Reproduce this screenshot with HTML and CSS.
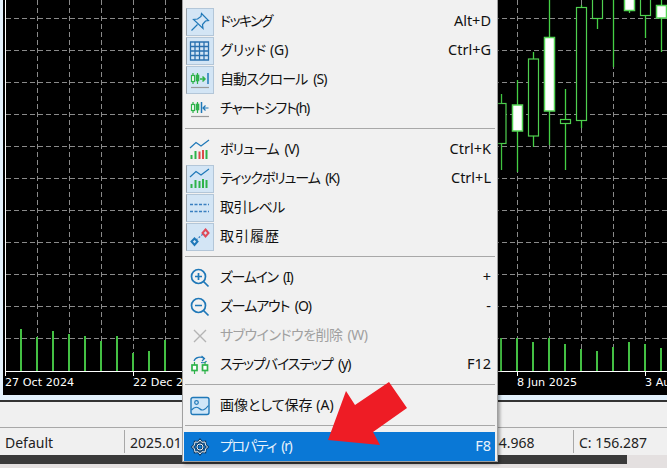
FILE: index.html
```html
<!DOCTYPE html>
<html lang="ja">
<head>
<meta charset="utf-8">
<title>Chart menu</title>
<link rel="stylesheet" href="styles.css">
</head>
<body>
<div class="page">
  <div class="chart-frame">
    <svg class="chart" width="664" height="395" viewBox="3 0 664 395">
      <path class="grid" d="M6 18.5H667M6 50.5H667M6 82.5H667M6 114.5H667M6 146.5H667M6 178.5H667M6 210.5H667M6 242.5H667M6 274.5H667M6 306.5H667M6 338.5H667"/>
      <path class="grid" d="M37.5 0V371M69.5 0V371M101.5 0V371M133.5 0V371M165.5 0V371M517.5 0V371M549.5 0V371M581.5 0V371M613.5 0V371M645.5 0V371"/>
      <path class="axis" d="M5.5 0V371.5H667M5.5 371V376M133.5 371V376M517.5 371V376M645.5 371V376"/>
      <path class="vol" d="M21 371V329M37 371V337M53 371V331M69 371V334M85 371V336M101 371V341M117 371V336M133 371V353M149 371V351M165 371V340M501 371V338M517 371V338M533 371V342M549 371V338M565 371V344M581 371V349M597 371V351M613 371V347M629 371V342M645 371V344M661 371V348"/>
      <path class="wick" d="M501.5 94V170M517.5 80V172M533.5 52V147M549.5 0V145M565.5 89V170M581.5 5V128M597.5 0V29M613.5 0V67M629.5 0V13M645.5 0V38M661.5 0V52"/>
      <rect class="hollow" x="495" y="103.5" width="11" height="40"/>
      <rect class="solid" x="512.5" y="105" width="10" height="26"/>
      <rect class="hollow" x="528.5" y="59" width="10" height="77"/>
      <rect class="solid" x="544.5" y="37.5" width="10" height="73.500"/>
      <rect class="hollow" x="560.5" y="119.500" width="10" height="4"/>
      <rect class="hollow" x="576.5" y="7.500" width="10" height="113"/>
      <rect class="hollow" x="592.500" y="-2" width="10" height="20.500"/>
      <rect class="solid" x="624.500" y="-2" width="10" height="12.500"/>
      <rect class="hollow" x="640.500" y="-2" width="10" height="17.500"/>
      <rect class="solid" x="656.500" y="5.500" width="10" height="12.500"/>
      <text class="date" x="5" y="386">27 Oct 2024</text>
      <text class="date" x="133" y="386">22 Dec 2024</text>
      <text class="date" x="517" y="386">8 Jun 2025</text>
      <text class="date" x="645" y="386">3 Aug</text>
    </svg>
  </div>
  <div class="toolbar"></div>
  <div class="status">
    <div class="cell cell-name">Default</div>
    <div class="cell cell-date">2025.01.05 00:00</div>
    <div class="cell cell-low">L: 154.968</div>
    <div class="cell cell-close">C: 156.287</div>
  </div>
  <div class="bottom">
    <div class="taskbar"></div>
  </div>

  <div class="menu">
    <div class="row"><span class="ic on"><svg viewBox="0 0 20 20"><path class="b" d="M11.500 1.500 18.500 8.500 15.500 9 12.500 12.500 13 16.500 3.500 7.500 7.500 7 11 4.500ZM7.500 12.500 1.500 18.500"/></svg></span><span class="lb t16">ドッキング</span><span class="sc">Alt+D</span></div>
    <div class="row"><span class="ic on"><svg viewBox="0 0 20 20"><path class="bg" d="M0 1H19M0 5.500H19M0 10H19M0 14.500H19M0 19H19M.5 .5V19.500M5 .5V19.500M9.500 .5V19.500M14 .5V19.500M18.500 .5V19.500"/></svg></span><span class="lb">グリッド (G)</span><span class="sc">Ctrl+G</span></div>
    <div class="row"><span class="ic on"><svg viewBox="0 0 20 20"><path class="g" d="M3 3V14M7.500 3V14"/><rect class="gh" x="1.500" y="5.500" width="3" height="6"/><rect class="gf" x="6" y="5" width="3" height="6"/><path class="gb" d="M10 9H14.500M12.500 6.500 15 9 12.500 11.500"/><path class="bb" d="M18 3V14"/><path class="u" d="M1 17.500H19"/></svg></span><span class="lb t07">自動スクロール (S)</span></div>
    <div class="row"><span class="ic"><svg viewBox="0 0 20 20"><path class="g" d="M3 3V14M7.500 3V14"/><rect class="gh" x="1.500" y="5.500" width="3" height="6"/><rect class="gf" x="6" y="5" width="3" height="6"/><path class="bb" d="M11.500 3V14"/><path class="b" d="M13 9H18.500M15.500 6.500 13 9 15.500 11.500"/><path class="u" d="M1 17.500H19"/></svg></span><span class="lb t12">チャートシフト(h)</span></div>
    <div class="sep"></div>
    <div class="row"><span class="ic"><svg viewBox="0 0 20 20"><path class="b" d="M0 8 6 2.500 11 6 19 0"/><path class="g2" d="M1.500 19V15M5.500 19V11M16.500 19V10"/><path class="r" d="M9.500 19V11.500M13 19V10"/></svg></span><span class="lb t07">ボリューム (V)</span><span class="sc">Ctrl+K</span></div>
    <div class="row"><span class="ic on"><svg viewBox="0 0 20 20"><path class="b" d="M0 8 6 2.500 11 6 19 0"/><path class="g2" d="M1.500 19V15M5.500 19V11M9.500 19V12M13 19V10M16.500 19V11"/></svg></span><span class="lb t09">ティックボリューム (K)</span><span class="sc">Ctrl+L</span></div>
    <div class="row"><span class="ic on"><svg viewBox="0 0 20 20"><path class="d" d="M0 6.500H19M0 13.500H19"/></svg></span><span class="lb t06">取引レベル</span></div>
    <div class="row"><span class="ic on"><svg viewBox="0 0 20 20"><path class="dt" d="M6 13 13 7"/><path class="b2f" d="M4.500 11.500 7.500 14.500 4.500 18 1.500 14.500Z"/><path class="rr" d="M15.500 2.500 18.500 6 15.500 9.500 12.500 6Z"/></svg></span><span class="lb p1">取引履歴</span></div>
    <div class="sep"></div>
    <div class="row"><span class="ic"><svg viewBox="0 0 20 20"><circle class="b2" cx="8.500" cy="8.500" r="7"/><path class="b2" d="M13.500 13.500 18.500 18.500M5 8.500H12M8.500 5V12"/></svg></span><span class="lb t10">ズームイン (I)</span><span class="sc">+</span></div>
    <div class="row"><span class="ic"><svg viewBox="0 0 20 20"><circle class="b2" cx="8.500" cy="8.500" r="7"/><path class="b2" d="M13.500 13.500 18.500 18.500M5 8.500H12"/></svg></span><span class="lb t09">ズームアウト (O)</span><span class="sc">-</span></div>
    <div class="row off"><span class="ic"><svg viewBox="0 0 20 20"><path class="x" d="M4 4 16 16M16 4 4 16"/></svg></span><span class="lb t05">サブウインドウを削除 (W)</span></div>
    <div class="row"><span class="ic"><svg viewBox="0 0 20 20"><path class="b" d="M4 6C5 2 11 1 14 3.500M16.500 6C15.500 8 13.500 8 11 7.500"/><path class="b" d="M11.500 1 14.500 3.500 12 6"/><path class="g" d="M4.500 7V19M15 7V19"/><rect class="gh2" x="2" y="10" width="5" height="5.500"/><rect class="gh2" x="12.500" y="10" width="5" height="5.500"/></svg></span><span class="lb t09">ステップバイステップ (y)</span><span class="sc">F12</span></div>
    <div class="sep"></div>
    <div class="row"><span class="ic"><svg viewBox="0 0 20 20"><rect class="pic" x="1" y="1.500" width="18" height="17" rx="2"/><circle class="b" cx="6.500" cy="6.500" r="1.800"/><path class="b" d="M1.500 14C5 10 8 11 10 13S15 14 18.500 9.500"/></svg></span><span class="lb">画像として保存 (A)</span></div>
    <div class="sep"></div>
    <div class="row active"><span class="ic"><svg viewBox="0 0 20 20"><path class="gear-o" d="M10 3 11.800 5.300 15 5 15.500 8 17.500 10 15.500 12 15 15 11.800 14.700 10 17 8.200 14.700 5 15 4.500 12 2.500 10 4.500 8 5 5 8.200 5.300Z"/><circle class="gear-o" cx="10" cy="10" r="3"/><path class="w" d="M10 3 11.800 5.300 15 5 15.500 8 17.500 10 15.500 12 15 15 11.800 14.700 10 17 8.200 14.700 5 15 4.500 12 2.500 10 4.500 8 5 5 8.200 5.300Z"/><circle class="w" cx="10" cy="10" r="3"/></svg></span><span class="lb t10">プロパティ (r)</span><span class="sc">F8</span></div>
  </div>

  <svg class="arrow" width="90" height="70" viewBox="325 380 90 70"><polygon points="328,440 346,391 355,405 389,382 407,408 373,432 380,445"/></svg>
</div>
</body>
</html>
```
FILE: styles.css
```css
* { box-sizing: border-box; }
html, body { margin: 0; padding: 0; }
body { font-family: "Noto Sans", "Noto Sans CJK JP", sans-serif; overflow: hidden; }
.page { position: relative; width: 667px; height: 468px; overflow: hidden; background: #f3ebeb; }

.chart-frame { height: 400px; padding-left: 3px; background: #e2f0fb; }
.chart { display: block; background: #000; }
.grid { fill: none; stroke: #8a8a8a; stroke-width: 1; stroke-dasharray: 5 3; }
.axis { fill: none; stroke: #fff; stroke-width: 1; }
.vol { fill: none; stroke: #43c043; stroke-width: 2; }
.wick { fill: none; stroke: #45d045; stroke-width: 1.300; }
.hollow { fill: #000; stroke: #4fd04f; stroke-width: 1.200; }
.solid { fill: #fff; stroke: #55d555; stroke-width: 1.500; }
.date { fill: #fff; font: 11.200px "DejaVu Sans", sans-serif; }

.toolbar { height: 28px; background: #f0f0f0; border-top: 2px solid #333; border-bottom: 1px solid #a8a8a8; }
.status { display: flex; height: 27px; background: #f0f0f0; font-size: 14px; color: #222; padding: 2px 0; }
.cell { line-height: 25px; white-space: nowrap; overflow: hidden; border-right: 1px solid #a8a8a8; }
.cell-name { width: 125px; padding-left: 5px; }
.cell-date { width: 260px; padding-left: 5px; border-right: 0; }
.cell-low { width: 189px; padding-left: 83px; }
.cell-close { padding-left: 5px; border-right: 0; }
.bottom { height: 13px; background: #e4e0e0; }
.taskbar { width: 627px; height: 9px; background: #3a3a3a; }

.menu { position: absolute; left: 182px; top: -4px; width: 316px; height: 466px; padding: 10px 2px 0 1px; background: #f1f1f1; border: 1px solid #a0a0a0; box-shadow: 2px 2px 3px rgba(0,0,0,.35); color: #111; font-size: 14px; font-feature-settings: "palt"; }
.row { display: flex; align-items: center; height: 29px; padding-right: 4px; }
.ic { flex: none; display: flex; align-items: center; justify-content: center; width: 28px; height: 28px; margin-left: 2px; margin-right: 6px; }
.ic.on { background: #d3e5f5; border: 1px solid #b3c6d8; border-left-color: #98a0a8; }
.ic svg { width: 20px; height: 20px; display: block; overflow: visible; }
.lb { flex: 1; white-space: nowrap; padding-bottom: 4px; }
.sc { white-space: nowrap; font-size: 14.500px; font-feature-settings: normal; padding-bottom: 4px; }
.t05 { letter-spacing: -.5px; word-spacing: 2px; }
.t06 { letter-spacing: -.6px; }
.t07 { letter-spacing: -.9px; word-spacing: 3px; }
.t09 { letter-spacing: -1.100px; word-spacing: 3px; }
.t10 { letter-spacing: -1.300px; word-spacing: 3px; }
.t12 { letter-spacing: -1.200px; }
.t16 { letter-spacing: -1.600px; }
.p1 { letter-spacing: 1px; }
.sep { height: 1px; margin: 5px 0 6px 1px; background: #a8a8a8; }
.off { color: #a0a0a0; }
.active { background: #0a78d6; color: #e8f2fb; }

.b, .b2, .bg, .bb, .g, .g2, .gb, .r, .u, .d, .dt, .x, .w, .rr, .gear-o { fill: none; }
.b { stroke: #1f78b8; stroke-width: 1.200; }
.b2 { stroke: #1f78b8; stroke-width: 1.700; }
.bb { stroke: #1f78b8; stroke-width: 1.500; }
.b2f { fill: none; stroke: #1f78b8; stroke-width: 2; }
.bg { stroke: #2a70ae; stroke-width: 1.300; }
.g { stroke: #2eb34a; stroke-width: 1.200; }
.g2 { stroke: #2eb34a; stroke-width: 2; }
.gb { stroke: #2eb34a; stroke-width: 1.500; }
.gf { fill: #2eb34a; stroke: #2eb34a; stroke-width: .6; }
.gh { fill: #fff; stroke: #2eb34a; stroke-width: 1.200; }
.gh2 { fill: #fff; stroke: #2eb34a; stroke-width: 1.700; }
.r { stroke: #dc4a4a; stroke-width: 2; }
.u { stroke: #9a9a9a; stroke-width: 1.200; }
.d { stroke: #3a7fc0; stroke-width: 1.400; stroke-dasharray: 3 1.500; }
.dt { stroke: #3a7fc0; stroke-width: 1.200; stroke-dasharray: 2 1.500; }
.rr { stroke: #e04a58; stroke-width: 2; }
.x { stroke: #b4b4b4; stroke-width: 1.400; }
.pic { fill: #cfe6f8; stroke: #1f78b8; stroke-width: 1.400; }
.gear-o { stroke: #123a60; stroke-width: 2.600; }
.w { stroke: #e8f2fb; stroke-width: 1; }

.arrow { position: absolute; left: 325px; top: 380px; }
.arrow polygon { fill: #ee1c25; }
```
